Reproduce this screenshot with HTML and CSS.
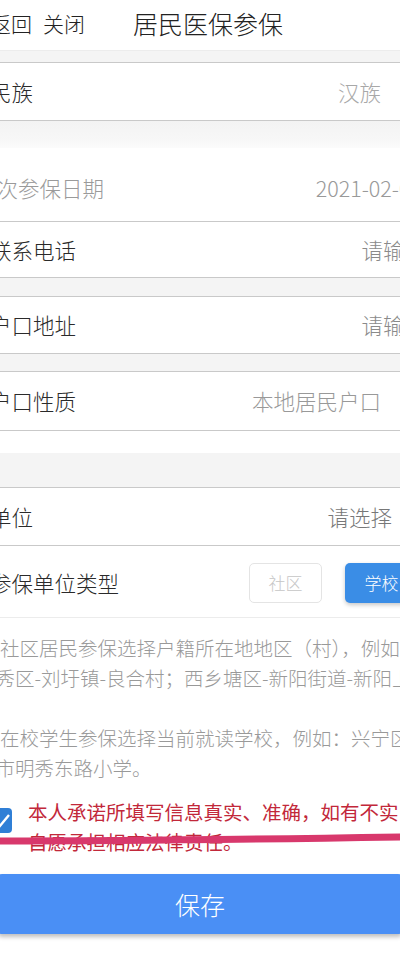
FILE: index.html
```html
<!DOCTYPE html>
<html lang="zh-CN">
<head>
<meta charset="utf-8">
<title>居民医保参保</title>
<link rel="stylesheet" href="styles.css">
</head>
<body>
<div class="screen">
  <div class="sheet">
    <header class="topbar">
      <span class="nav">返回</span>
      <span class="nav nav-close">关闭</span>
      <h1 class="title">居民医保参保</h1>
    </header>
    <div class="gap gap-top"></div>

    <div class="row row-boxed row-h57">
      <span class="label">民族</span>
      <span class="value value-light">汉族</span>
      <span class="arrow"><svg width="9" height="16" viewBox="0 0 9 16"><path d="M1 1 L8 8 L1 15" fill="none" stroke="#c4c4c4" stroke-width="1.6"/></svg></span>
    </div>
    <div class="gap gap-mid"></div>

    <div class="row row-date">
      <span class="label label-muted label-wide">首次参保日期</span>
      <span class="value value-date">2021-02-01</span>
    </div>
    <div class="row row-h55">
      <span class="label">联系电话</span>
      <span class="value value-input">请输入</span>
    </div>
    <div class="gap gap-18"></div>

    <div class="row row-boxed row-h56">
      <span class="label">户口地址</span>
      <span class="value value-input">请输入</span>
    </div>
    <div class="gap gap-17"></div>

    <div class="row row-boxed row-h58">
      <span class="label">户口性质</span>
      <span class="value">本地居民户口</span>
      <span class="arrow"><svg width="9" height="16" viewBox="0 0 9 16"><path d="M1 1 L8 8 L1 15" fill="none" stroke="#c4c4c4" stroke-width="1.6"/></svg></span>
    </div>
    <div class="blank"></div>
    <div class="gap gap-34"></div>

    <div class="row row-boxed row-h57">
      <span class="label">单位</span>
      <span class="value value-select">请选择</span>
      <span class="arrow arrow-near"><svg width="9" height="16" viewBox="0 0 9 16"><path d="M1 1 L8 8 L1 15" fill="none" stroke="#c4c4c4" stroke-width="1.6"/></svg></span>
    </div>
    <div class="row row-type">
      <span class="label">参保单位类型</span>
      <div class="segs">
        <span class="seg seg-off">社区</span>
        <span class="seg seg-on">学校</span>
      </div>
    </div>

    <div class="notes">
      <p class="note">社区居民参保选择户籍所在地地区（村），例如：<br>青秀区-刘圩镇-良合村；西乡塘区-新阳街道-新阳上尧社区。</p>
      <p class="note">在校学生参保选择当前就读学校，例如：兴宁区-南<br>宁市明秀东路小学。</p>
    </div>

    <div class="agree">
      <span class="check"><svg width="25" height="25" viewBox="0 0 25 25"><rect x="0" y="0" width="25" height="25" rx="4" fill="#2f7fd6"/><polyline points="6,13 12,19 22,7" fill="none" stroke="#fff" stroke-width="2.4"/></svg></span>
      <p class="agree-text">本人承诺所填写信息真实、准确，如有不实，<br>自愿承担相应法律责任。</p>
    </div>

    <button class="save" type="button">保存</button>
  </div>
  <svg class="annotation" width="400" height="953" viewBox="0 0 400 953"><path d="M-2 841 Q 150 841 402 837" fill="none" stroke="#d8386c" stroke-width="7"/></svg>
</div>
</body>
</html>
```

FILE: styles.css
```css
html, body {
  margin: 0;
  padding: 0;
  background: #fff;
}

body {
  font-family: "Noto Sans CJK SC", sans-serif;
  font-weight: 300;
  color: #333;
}

.screen {
  position: relative;
  width: 400px;
  height: 953px;
  overflow: hidden;
  background: #fff;
}

.sheet {
  width: 450px;
  margin-left: -10px;
}

/* top bar */
.topbar {
  height: 46px;
  padding-bottom: 5px;
  display: flex;
  align-items: center;
  background: #fff;
  white-space: nowrap;
}

.nav {
  font-size: 21px;
  line-height: 30px;
  color: #222;
}

.nav-close {
  margin-left: 11px;
}

.title {
  margin: 0 0 0 48px;
  font-size: 25px;
  line-height: 34px;
  font-weight: 300;
  color: #222;
}

/* gaps */
.gap {
  background: #f4f4f4;
}
.gap-top { height: 11px; border-top: 1px solid #ececec; margin-top: -1px; }
.gap-mid { height: 27px; background: linear-gradient(#f3f3f3, #f7f7f7 70%, #fbfbfb); }
.gap-18 { height: 18px; }
.gap-17 { height: 17px; }
.gap-34 { height: 34px; }
.blank { height: 22px; background: #fff; }

/* rows */
.row {
  display: flex;
  align-items: center;
  background: #fff;
  border-bottom: 1px solid #c9c9c9;
  padding-right: 14px;
  white-space: nowrap;
  font-size: 21.5px;
  line-height: 30px;
}

.row-boxed {
  border-top: 1px solid #c9c9c9;
}

.row-h55 { height: 55px; }
.row-h56 { height: 56px; }
.row-h57 { height: 57px; }
.row-h58 { height: 58px; }

.row-date {
  height: 66px;
  padding-top: 7px;
}

.row-type {
  height: 69px;
  padding-top: 2px;
  border-bottom-color: #ececec;
}

.label {
  color: #2a2a2a;
}

.label-muted {
  color: #9a9a9a;
}

.label-wide {
  margin-left: -15px;
}

.value {
  margin-left: auto;
  color: #999;
}

.value-light { color: #a8a8a8; }
.value-date { color: #999; margin-right: 4px; }
.value-input { color: #8a8a8a; }
.value-select { color: #777; }

.arrow {
  display: flex;
  align-items: center;
  width: 24px;
  margin-left: 21px;
}

.arrow-near {
  margin-left: 10px;
}

/* segmented choice */
.segs {
  margin-left: auto;
  margin-right: 8px;
  display: flex;
  gap: 23px;
}

.seg {
  width: 73px;
  height: 40px;
  box-sizing: border-box;
  border-radius: 5px;
  display: flex;
  align-items: center;
  justify-content: center;
  font-size: 17px;
}

.seg-off {
  border: 1px solid #e4e4e4;
  color: #c6c6c6;
  background: #fff;
}

.seg-on {
  background: #3a8de6;
  color: #fff;
  box-shadow: 0 2px 4px rgba(0, 0, 0, 0.22);
}

/* notes */
.notes {
  margin: 15px 0 0 -14px;
}

.note {
  margin: 0;
  font-size: 19.5px;
  line-height: 30px;
  color: #999;
  text-indent: 24px;
  white-space: nowrap;
}

.note + .note {
  margin-top: 30px;
}

/* agreement */
.agree {
  display: flex;
  align-items: flex-start;
  margin: 14px 0 0 -3px;
}

.check {
  display: block;
  width: 25px;
  height: 25px;
  margin-top: 11px;
  flex: none;
}

.check svg {
  display: block;
}

.agree-text {
  margin: 0 0 0 16px;
  font-size: 19.5px;
  line-height: 30px;
  font-weight: 400;
  color: #c2283a;
  white-space: nowrap;
}

/* save */
.save {
  display: flex;
  align-items: center;
  justify-content: center;
  margin: 17px 0 0 8px;
  width: 404px;
  height: 60px;
  border: 0;
  border-radius: 4px;
  background: #4a8ff5;
  color: #fff;
  font-family: "Noto Sans CJK SC", sans-serif;
  font-weight: 300;
  font-size: 25px;
  box-shadow: 0 3px 4px rgba(0, 0, 0, 0.25);
  padding: 0;
}

/* annotation stroke drawn over the screenshot */
.annotation {
  position: absolute;
  left: 0;
  top: 0;
  pointer-events: none;
}
```
